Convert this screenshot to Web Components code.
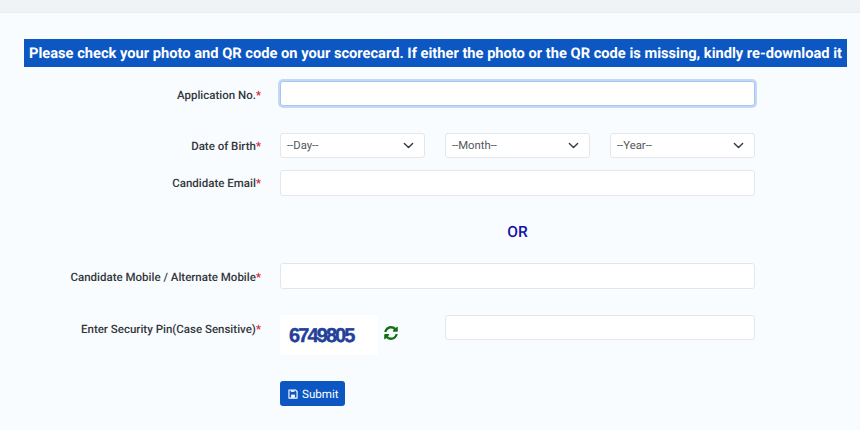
<!DOCTYPE html>
<html><head><meta charset="utf-8">
<style>
html,body{margin:0;padding:0;background:#f9fcff;font-family:Roboto,"Liberation Sans",sans-serif;text-rendering:geometricPrecision}
score-page{display:block;width:860px;height:430px;overflow:hidden}
</style></head><body>
<template id="t-page"><style>
:host{display:flex;flex-direction:column;background:#f9fcff}
.top{height:12px;background:#f0f3f6;border-bottom:1px solid #e9edf1;flex:none}
.banner{margin:26px 13px 0 24px;height:28px;line-height:28px;background:#0c57c2;color:#fff;font-weight:700;font-size:14.67px;white-space:nowrap;padding-left:5px;overflow:hidden}
.form{display:flex;flex-direction:column;margin-top:13px}
</style>
<div class="top"></div>
<div class="banner"><slot name="banner"></slot></div>
<div class="form"><slot></slot></div>
</template>

<template id="t-row"><style>
:host{display:grid;grid-template-columns:261px 475px;column-gap:19px;align-items:start}
.l{text-align:right;font-size:11.5px;font-weight:500;color:#33383d;white-space:nowrap;line-height:18px;padding-top:var(--lt,0px)}
.l b{color:#d3243a;font-weight:500}
</style>
<div class="l"><slot name="label"></slot><b>*</b></div>
<div class="f"><slot></slot></div>
</template>

<template id="t-input"><style>
:host{display:block}
input{display:block;box-sizing:border-box;width:100%;height:var(--h,26px);margin:0;padding:0 8px;background:#fff;border:1px solid #e3e7eb;border-radius:3px;outline:none;font:13px Roboto,sans-serif}
:host([focus]) input{border-color:#a9c6ef;box-shadow:0 0 0 2px #c3d8f6;height:25px;margin:1px 0 2px 0;width:475px}
</style><input type="text"></template>

<template id="t-select"><style>
:host{display:flex;align-items:center;justify-content:space-between;box-sizing:border-box;height:25px;background:#fff;border:1px solid #e3e7eb;border-radius:3px;padding:0 10px 0 6px;font-size:11.3px;color:#50565c}
svg{width:11px;height:11px;flex:none}
</style><slot></slot><svg viewBox="0 0 16 16"><path fill="none" stroke="#343a40" stroke-width="2" stroke-linecap="round" stroke-linejoin="round" d="M2 5l6 6 6-6"/></svg></template>

<template id="t-dob"><style>
:host{display:grid;grid-template-columns:145px 145px 145px;column-gap:20px}
</style><slot></slot></template>

<template id="t-captcha"><style>
:host{display:grid;grid-template-columns:145px 20px 310px;align-items:start}
.img{height:40px;background:#fff;display:flex;align-items:center;padding-left:9px;box-sizing:border-box;font-family:"Liberation Sans",sans-serif;font-weight:700;font-size:20px;letter-spacing:-1.9px;color:#23409a;padding-top:2px;width:98px;-webkit-text-stroke:.4px #23409a}
.wrap{display:flex;align-items:flex-start;grid-column:1}
svg{width:14px;height:14px;margin:11px 0 0 6px;flex:none}
.side{grid-column:3;display:block}
</style>
<div class="wrap"><div class="img"><slot name="code"></slot></div><svg viewBox="0 0 512 512"><path fill="#157015" d="M370.7 133.3C339.5 104 298.9 88 256 88c-77.500 0-143.200 53.100-161.700 125.600-1.300 5.100-5.900 8.400-11 8.400H24.100c-7.500 0-13.200-6.800-11.800-14.200C34.600 89.100 134.500 0 256 0c66.600 0 127.100 26.200 171.900 68.900L464 32.800C479.100 17.700 505 28.400 505 49.800V184c0 13.300-10.700 24-24 24H346.800c-21.400 0-32.100-25.900-17-41l41-39.700zM32 296h134.200c21.400 0 32.100 25.900 17 41l-41.800 41.800C172.500 408 213.100 424 256 424c77.400 0 143.200-53 161.700-125.600 1.300-5.100 5.900-8.400 11-8.400h59.300c7.500 0 13.200 6.800 11.800 14.200C477.400 422.900 377.500 512 256 512c-66.600 0-127.100-26.200-171.900-68.900L48 479.200C32.900 494.300 7 483.600 7 462.200V328c0-13.300 10.700-24 24-24z"/></svg></div>
<div class="side"><slot></slot></div>
</template>

<template id="t-btn"><style>
:host{display:inline-flex;align-items:center;box-sizing:border-box;height:25px;width:65px;background:#0c57c2;border-radius:3px;color:#fff;font-size:11.6px;padding-left:8px;gap:4px}
svg{width:10px;height:10px;flex:none}
</style><svg viewBox="0 0 16 16"><path fill="none" stroke="#fff" stroke-width="1.8" stroke-linejoin="round" d="M2 1.500h10l2.500 2.500v10.500H1.500V1.500z"/><rect x="5" y="9" width="6" height="5" fill="#fff"/><rect x="4.500" y="2" width="6" height="2.500" fill="#fff"/></svg><slot></slot></template>

<template id="t-or"><style>
:host{display:block;text-align:center;color:#1313a6;font-size:15.5px;font-weight:500;line-height:20px;padding-left:175px}
</style><slot></slot></template>

<score-page>
<span slot="banner">Please check your photo and QR code on your scorecard. If either the photo or the QR code is missing, kindly re-download it</span>
<form-row style="--lt:6px"><span slot="label">Application No.</span><text-field focus style="--h:28px"></text-field></form-row>
<form-row style="--lt:4px;margin-top:25px"><span slot="label">Date of Birth</span><dob-group><pick-list>--Day--</pick-list><pick-list>--Month--</pick-list><pick-list>--Year--</pick-list></dob-group></form-row>
<form-row style="--lt:4px;margin-top:12px"><span slot="label">Candidate Email</span><text-field></text-field></form-row>
<or-mark style="margin-top:26px">OR</or-mark>
<form-row style="--lt:5px;margin-top:21px"><span slot="label">Candidate Mobile / Alternate Mobile</span><text-field></text-field></form-row>
<form-row style="--lt:5px;margin-top:26px"><span slot="label">Enter Security Pin(Case Sensitive)</span><captcha-box><span slot="code">6749805</span><text-field style="--h:25px"></text-field></captcha-box></form-row>
<form-row-plain style="margin-top:26px"><submit-btn>Submit</submit-btn></form-row-plain>
</score-page>

<script>
function reg(tag,tid){customElements.define(tag,class extends HTMLElement{constructor(){super();this.attachShadow({mode:'open'}).appendChild(document.getElementById(tid).content.cloneNode(true));}});}
reg('score-page','t-page');reg('form-row','t-row');reg('text-field','t-input');reg('pick-list','t-select');reg('dob-group','t-dob');reg('captcha-box','t-captcha');reg('submit-btn','t-btn');reg('or-mark','t-or');
customElements.define('form-row-plain',class extends HTMLElement{constructor(){super();this.attachShadow({mode:'open'}).innerHTML='<style>:host{display:block;padding-left:280px}</style><slot></slot>';}});
</script>
</body></html>
